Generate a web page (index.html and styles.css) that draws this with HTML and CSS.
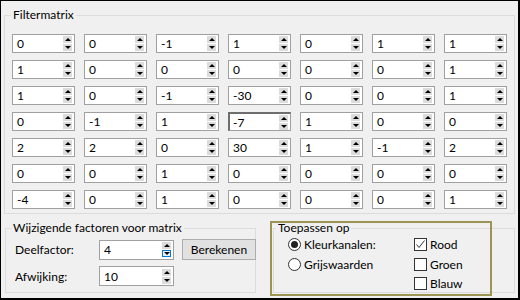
FILE: index.html
```html
<!DOCTYPE html>
<html lang="nl">
<head>
    <meta charset="UTF-8">
    <title>Filtermatrix</title>
    <link rel="stylesheet" href="styles.css">
</head>
<body>
    <div class="window">
        <fieldset class="matrix-group">
            <legend>Filtermatrix</legend>
            <div class="matrix">
                <!-- row 1 -->
                <div class="spin"><span>0</span><div class="arrows"><i class="up"></i><i class="down"></i></div></div>
                <div class="spin"><span>0</span><div class="arrows"><i class="up"></i><i class="down"></i></div></div>
                <div class="spin"><span>-1</span><div class="arrows"><i class="up"></i><i class="down"></i></div></div>
                <div class="spin"><span>1</span><div class="arrows"><i class="up"></i><i class="down"></i></div></div>
                <div class="spin"><span>0</span><div class="arrows"><i class="up"></i><i class="down"></i></div></div>
                <div class="spin"><span>1</span><div class="arrows"><i class="up"></i><i class="down"></i></div></div>
                <div class="spin"><span>1</span><div class="arrows"><i class="up"></i><i class="down"></i></div></div>
                <!-- row 2 -->
                <div class="spin"><span>1</span><div class="arrows"><i class="up"></i><i class="down"></i></div></div>
                <div class="spin"><span>0</span><div class="arrows"><i class="up"></i><i class="down"></i></div></div>
                <div class="spin"><span>0</span><div class="arrows"><i class="up"></i><i class="down"></i></div></div>
                <div class="spin"><span>0</span><div class="arrows"><i class="up"></i><i class="down"></i></div></div>
                <div class="spin"><span>0</span><div class="arrows"><i class="up"></i><i class="down"></i></div></div>
                <div class="spin"><span>0</span><div class="arrows"><i class="up"></i><i class="down"></i></div></div>
                <div class="spin"><span>1</span><div class="arrows"><i class="up"></i><i class="down"></i></div></div>
                <!-- row 3 -->
                <div class="spin"><span>1</span><div class="arrows"><i class="up"></i><i class="down"></i></div></div>
                <div class="spin"><span>0</span><div class="arrows"><i class="up"></i><i class="down"></i></div></div>
                <div class="spin"><span>-1</span><div class="arrows"><i class="up"></i><i class="down"></i></div></div>
                <div class="spin"><span>-30</span><div class="arrows"><i class="up"></i><i class="down"></i></div></div>
                <div class="spin"><span>0</span><div class="arrows"><i class="up"></i><i class="down"></i></div></div>
                <div class="spin"><span>0</span><div class="arrows"><i class="up"></i><i class="down"></i></div></div>
                <div class="spin"><span>1</span><div class="arrows"><i class="up"></i><i class="down"></i></div></div>
                <!-- row 4 -->
                <div class="spin"><span>0</span><div class="arrows"><i class="up"></i><i class="down"></i></div></div>
                <div class="spin"><span>-1</span><div class="arrows"><i class="up"></i><i class="down"></i></div></div>
                <div class="spin"><span>1</span><div class="arrows"><i class="up"></i><i class="down"></i></div></div>
                <div class="spin focused"><span>-7</span><div class="arrows"><i class="up"></i><i class="down"></i></div></div>
                <div class="spin"><span>1</span><div class="arrows"><i class="up"></i><i class="down"></i></div></div>
                <div class="spin"><span>0</span><div class="arrows"><i class="up"></i><i class="down"></i></div></div>
                <div class="spin"><span>0</span><div class="arrows"><i class="up"></i><i class="down"></i></div></div>
                <!-- row 5 -->
                <div class="spin"><span>2</span><div class="arrows"><i class="up"></i><i class="down"></i></div></div>
                <div class="spin"><span>2</span><div class="arrows"><i class="up"></i><i class="down"></i></div></div>
                <div class="spin"><span>0</span><div class="arrows"><i class="up"></i><i class="down"></i></div></div>
                <div class="spin"><span>30</span><div class="arrows"><i class="up"></i><i class="down"></i></div></div>
                <div class="spin"><span>1</span><div class="arrows"><i class="up"></i><i class="down"></i></div></div>
                <div class="spin"><span>-1</span><div class="arrows"><i class="up"></i><i class="down"></i></div></div>
                <div class="spin"><span>2</span><div class="arrows"><i class="up"></i><i class="down"></i></div></div>
                <!-- row 6 -->
                <div class="spin"><span>0</span><div class="arrows"><i class="up"></i><i class="down"></i></div></div>
                <div class="spin"><span>0</span><div class="arrows"><i class="up"></i><i class="down"></i></div></div>
                <div class="spin"><span>1</span><div class="arrows"><i class="up"></i><i class="down"></i></div></div>
                <div class="spin"><span>0</span><div class="arrows"><i class="up"></i><i class="down"></i></div></div>
                <div class="spin"><span>0</span><div class="arrows"><i class="up"></i><i class="down"></i></div></div>
                <div class="spin"><span>0</span><div class="arrows"><i class="up"></i><i class="down"></i></div></div>
                <div class="spin"><span>0</span><div class="arrows"><i class="up"></i><i class="down"></i></div></div>
                <!-- row 7 -->
                <div class="spin"><span>-4</span><div class="arrows"><i class="up"></i><i class="down"></i></div></div>
                <div class="spin"><span>0</span><div class="arrows"><i class="up"></i><i class="down"></i></div></div>
                <div class="spin"><span>1</span><div class="arrows"><i class="up"></i><i class="down"></i></div></div>
                <div class="spin"><span>0</span><div class="arrows"><i class="up"></i><i class="down"></i></div></div>
                <div class="spin"><span>0</span><div class="arrows"><i class="up"></i><i class="down"></i></div></div>
                <div class="spin"><span>0</span><div class="arrows"><i class="up"></i><i class="down"></i></div></div>
                <div class="spin"><span>1</span><div class="arrows"><i class="up"></i><i class="down"></i></div></div>
            </div>
        </fieldset>

        <div class="bottom">
            <fieldset class="factors">
                <legend>Wijzigende factoren voor matrix</legend>
                <div class="factor-grid">
                    <label>Deelfactor:</label>
                    <div class="spin wide"><span>4</span><div class="arrows"><i class="up"></i><i class="down hover"></i></div></div>
                    <button type="button">Berekenen</button>
                    <label>Afwijking:</label>
                    <div class="spin wide"><span>10</span><div class="arrows"><i class="up"></i><i class="down"></i></div></div>
                </div>
            </fieldset>

            <div class="apply-wrap">
                <fieldset class="apply">
                    <legend>Toepassen op</legend>
                    <div class="apply-grid">
                        <div class="option"><span class="radio checked"></span>Kleurkanalen:</div>
                        <div class="option"><span class="check checked"><svg width="11" height="11" viewBox="0 0 11 11"><polyline points="1.5,5.5 4,8.5 9.5,1.5" fill="none" stroke="#333" stroke-width="1"/></svg></span>Rood</div>
                        <div class="option"><span class="radio"></span>Grijswaarden</div>
                        <div class="option"><span class="check"></span>Groen</div>
                        <div></div>
                        <div class="option"><span class="check"></span>Blauw</div>
                    </div>
                </fieldset>
            </div>
        </div>
    </div>
</body>
</html>
```

FILE: styles.css
```css
body {
    margin: 0;
    font-family: Lato, "Noto Sans", sans-serif;
    font-size: 12px;
    color: #000;
    background: #f0f0f0;
}
.window {
    width: 520px;
    height: 300px;
    box-sizing: border-box;
    border-top: 1px solid #000;
    border-left: 1px solid #000;
    border-right: 2px solid #000;
    border-bottom: 2px solid #000;
    padding: 6px 3px 0 3px;
    background: #f0f0f0;
}
fieldset {
    margin: 0;
    border: 1px solid #dcdcdc;
    min-width: 0;
}
legend {
    padding: 0 2px;
    line-height: 16px;
    margin-left: -1px;
}
.matrix-group {
    width: 511px;
    box-sizing: border-box;
    padding: 11px 0 4px 7px;
}
.matrix {
    display: grid;
    grid-template-columns: repeat(7, 63px);
    column-gap: 9px;
    row-gap: 7px;
}
.spin {
    height: 19px;
    box-sizing: border-box;
    border: 1px solid #a0a0a0;
    background: #fff;
    display: flex;
    align-items: center;
    justify-content: space-between;
    padding: 0 2px 0 4px;
}
.spin span {
    line-height: 17px;
}
.spin.focused {
    border-color: #a0a0a0;
    border-top: 2px solid #6e6e6e;
    border-left: 2px solid #6e6e6e;
    padding-left: 3px;
}
.arrows {
    display: flex;
    flex-direction: column;
    gap: 1px;
}
.arrows i {
    width: 9px;
    height: 7px;
    box-sizing: border-box;
    background: #dcdcdc;
    display: flex;
    align-items: center;
    justify-content: center;
}
.arrows i::after {
    content: "";
    border-left: 3px solid transparent;
    border-right: 3px solid transparent;
}
.arrows .up::after {
    border-bottom: 3px solid #000;
}
.arrows .down::after {
    border-top: 3px solid #000;
}
.arrows i.hover {
    background: #e5f1fb;
    border: 1px solid #0078d7;
}
.bottom {
    display: flex;
    margin-top: 6px;
}
.factors {
    width: 251px;
    box-sizing: border-box;
    margin-left: 1px;
    padding: 3px 0 6px 9px;
    height: 73px;
}
.factors legend {
    margin-left: -4px;
}
.factor-grid {
    display: grid;
    grid-template-columns: 76px 75px 74px;
    column-gap: 8px;
    row-gap: 6px;
    align-items: center;
}
.spin.wide {
    height: 20px;
}
button {
    font: inherit;
    height: 21px;
    background: #e1e1e1;
    border: 1px solid #adadad;
    padding: 0;
    color: #000;
}
.apply-wrap {
    position: relative;
    margin-left: 17px;
}
.apply-wrap::after {
    content: "";
    position: absolute;
    left: -3px;
    top: 1px;
    width: 218px;
    height: 71px;
    border: 2px solid #9b9452;
    pointer-events: none;
}
.apply {
    width: 242px;
    height: 73px;
    box-sizing: border-box;
    padding: 0 0 0 14px;
}
.apply legend {
    margin-left: -12px;
}
.apply-grid {
    display: grid;
    grid-template-columns: 126px auto;
    margin-top: -2px;
}
.option {
    display: flex;
    align-items: center;
    height: 20px;
    gap: 3px;
}
.option:nth-child(n+5) {
    height: 19px;
}
.radio {
    width: 13px;
    height: 13px;
    box-sizing: border-box;
    border: 1px solid #333;
    border-radius: 50%;
    background: #fff;
    display: flex;
    align-items: center;
    justify-content: center;
}
.radio.checked::after {
    content: "";
    width: 7px;
    height: 7px;
    border-radius: 50%;
    background: #222;
}
.check {
    width: 13px;
    height: 13px;
    box-sizing: border-box;
    border: 1px solid #333;
    background: #fff;
    display: flex;
    align-items: center;
    justify-content: center;
}
```
